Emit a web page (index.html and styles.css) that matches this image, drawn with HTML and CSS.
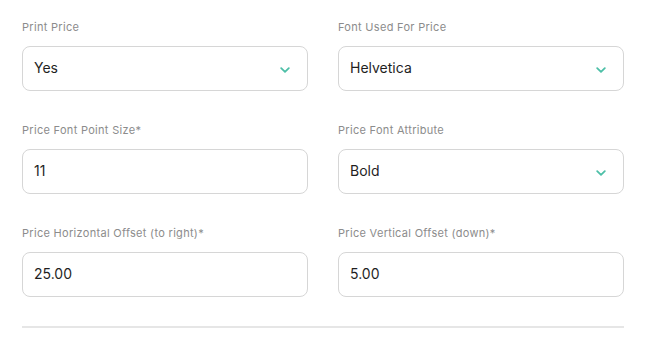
FILE: index.html
```html
<!DOCTYPE html>
<html lang="en">
<head>
  <meta charset="UTF-8" />
  <title>Price Settings</title>
  <link rel="stylesheet" href="styles.css">
</head>
<body>
  <section class="price-form">
    <div class="price-form--grid">
      <div class="field">
        <label class="field-label">Print Price</label>
        <div class="field-box field-select">
          <span>Yes</span>
          <svg class="chevron" width="10" height="6" viewBox="0 0 10 6"><path d="M1.2 1.2 L5 4.8 L8.8 1.2" fill="none" stroke="#4dbfa7" stroke-width="1.8" stroke-linecap="round" stroke-linejoin="round"/></svg>
        </div>
      </div>
      <div class="field">
        <label class="field-label">Font Used For Price</label>
        <div class="field-box field-select">
          <span>Helvetica</span>
          <svg class="chevron" width="10" height="6" viewBox="0 0 10 6"><path d="M1.2 1.2 L5 4.8 L8.8 1.2" fill="none" stroke="#4dbfa7" stroke-width="1.8" stroke-linecap="round" stroke-linejoin="round"/></svg>
        </div>
      </div>
      <div class="field">
        <label class="field-label">Price Font Point Size*</label>
        <div class="field-box"><span>11</span></div>
      </div>
      <div class="field">
        <label class="field-label">Price Font Attribute</label>
        <div class="field-box field-select">
          <span>Bold</span>
          <svg class="chevron" width="10" height="6" viewBox="0 0 10 6"><path d="M1.2 1.2 L5 4.8 L8.8 1.2" fill="none" stroke="#4dbfa7" stroke-width="1.8" stroke-linecap="round" stroke-linejoin="round"/></svg>
        </div>
      </div>
      <div class="field">
        <label class="field-label">Price Horizontal Offset (to right)*</label>
        <div class="field-box"><span>25.00</span></div>
      </div>
      <div class="field">
        <label class="field-label">Price Vertical Offset (down)*</label>
        <div class="field-box"><span>5.00</span></div>
      </div>
    </div>
    <hr class="price-form--divider">
  </section>
</body>
</html>
```

FILE: styles.css
```css
* { box-sizing: border-box; margin: 0; padding: 0; }

body {
  background: #fff;
  font-family: 'Inter', 'Open Sans', sans-serif;
  color: #222;
}

.price-form {
  width: 602px;
  margin-left: 22px;
  padding-top: 19px;
}

.price-form--grid {
  display: grid;
  grid-template-columns: 286px 286px;
  column-gap: 30px;
  row-gap: 31px;
}

.field-label {
  display: block;
  font-size: 11px;
  line-height: 16px;
  letter-spacing: 0.3px;
  color: #8c8c8c;
  margin-bottom: 11px;
}

.field-box {
  height: 45px;
  border: 1px solid #d6d6d6;
  border-radius: 8px;
  padding: 0 11px;
  display: flex;
  align-items: center;
  justify-content: space-between;
  font-size: 14px;
  color: #1f1f1f;
}

.field-box span {
  margin-top: -2px;
}

.chevron {
  margin-right: 6px;
  margin-top: 2px;
}

.price-form--divider {
  border: none;
  border-top: 2px solid #e6e6e6;
  margin-top: 29px;
}
```
